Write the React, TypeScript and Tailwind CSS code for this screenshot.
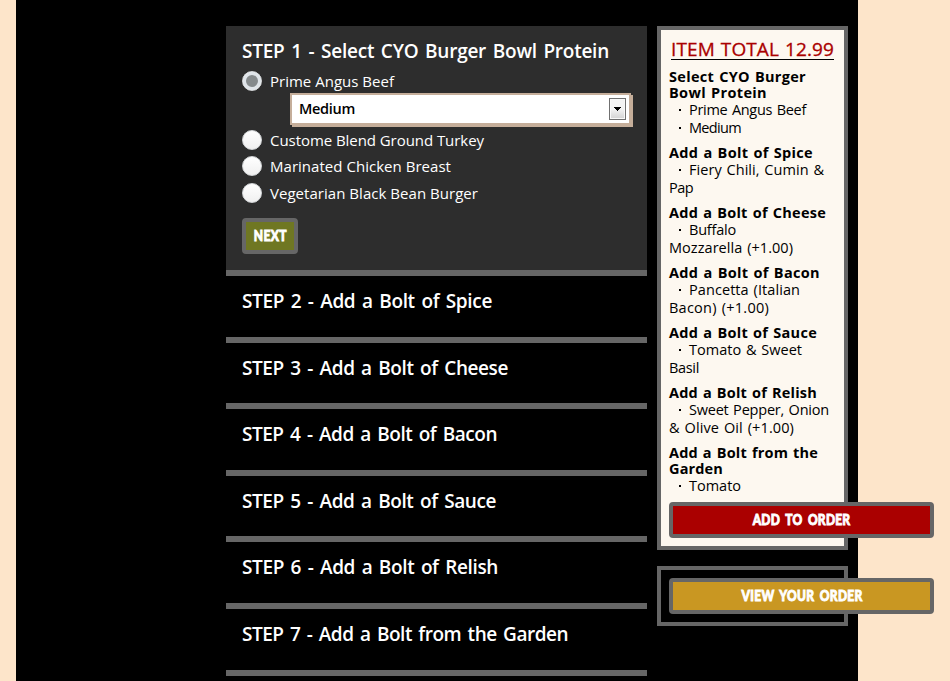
import { useLayoutEffect, useRef, type ReactNode } from "react";

/* A run of text whose tracking is tuned so that it fills `w` pixels. */
function Fit({ w, className = "", children }: { w: number; className?: string; children: string }) {
  const ref = useRef<HTMLSpanElement>(null);
  useLayoutEffect(() => {
    const el = ref.current;
    if (!el) return;
    el.style.letterSpacing = "0px";
    const natural = el.getBoundingClientRect().width;
    el.style.letterSpacing = `${(w - natural) / children.length}px`;
  }, [w, children]);
  return (
    <span ref={ref} className={`inline-block whitespace-pre ${className}`}>
      {children}
    </span>
  );
}

function StepTitle({ w, children }: { w: number; children: string }) {
  return (
    <h2 className="h-[26px] text-[19px] leading-[27px] font-semibold text-white">
      <Fit w={w} className="[word-spacing:2px]">{children}</Fit>
    </h2>
  );
}

function Radio({ label, w, checked = false, className = "" }: { label: string; w: number; checked?: boolean; className?: string }) {
  return (
    <label className={`flex h-5 items-center gap-2 text-[15px] leading-5 font-medium text-white ${className}`}>
      <span className="flex size-5 shrink-0 items-center justify-center rounded-full border border-[#d5d8da] bg-linear-to-b from-white to-[#f0f0f0]">
        {checked && <span className="size-full rounded-full border-[3px] border-[#dfe4e9] bg-[#858a8c]" />}
      </span>
      <Fit w={w}>{label}</Fit>
    </label>
  );
}

/* The caption is set condensed: laid out wider, then squeezed to 80%. */
function Button({ w, className, children }: { w: number; className: string; children: string }) {
  return (
    <button className={`flex h-9 shrink-0 items-center justify-center rounded-[4px] border-4 border-[#666] pb-px font-[Lato,sans-serif] text-[15px] leading-none font-black text-white ${className}`}>
      <span className="translate-x-[0.5px] scale-x-80">
        <CondensedCaption w={w}>{children}</CondensedCaption>
      </span>
    </button>
  );
}

function CondensedCaption({ w, children }: { w: number; children: string }) {
  const ref = useRef<HTMLSpanElement>(null);
  useLayoutEffect(() => {
    const el = ref.current;
    if (!el) return;
    el.style.letterSpacing = "0px";
    el.style.letterSpacing = `${(w / 0.8 - el.offsetWidth) / children.length}px`;
  }, [w, children]);
  return (
    <span ref={ref} className="inline-block whitespace-pre [-webkit-text-stroke:0.9px_white] [word-spacing:3px]">
      {children}
    </span>
  );
}

type Line = [string, number];

const groups: { heads: Line[]; items: { text: Line; rest?: Line }[] }[] = [
  { heads: [["Select CYO Burger", 137], ["Bowl Protein", 98]], items: [{ text: ["Prime Angus Beef", 117] }, { text: ["Medium", 52] }] },
  { heads: [["Add a Bolt of Spice", 144]], items: [{ text: ["Fiery Chili, Cumin &", 135], rest: ["Pap", 24] }] },
  { heads: [["Add a Bolt of Cheese", 157]], items: [{ text: ["Buffalo", 47], rest: ["Mozzarella (+1.00)", 124] }] },
  { heads: [["Add a Bolt of Bacon", 151]], items: [{ text: ["Pancetta (Italian", 111], rest: ["Bacon) (+1.00)", 100] }] },
  { heads: [["Add a Bolt of Sauce", 148]], items: [{ text: ["Tomato & Sweet", 113], rest: ["Basil", 30] }] },
  { heads: [["Add a Bolt of Relish", 148]], items: [{ text: ["Sweet Pepper, Onion", 140], rest: ["& Olive Oil (+1.00)", 125] }] },
  { heads: [["Add a Bolt from the", 149], ["Garden", 54]], items: [{ text: ["Tomato", 52] }] },
];

function Group({ heads, items }: (typeof groups)[number]) {
  return (
    <section className="mb-2">
      {heads.map(([t, w]) => (
        <h3 key={t} className="h-4 text-[14.5px] leading-4 font-bold">
          <Fit w={w} className="[word-spacing:1px]">{t}</Fit>
        </h3>
      ))}
      <ul className="text-[14.5px] leading-[18px]">
        {items.map(({ text, rest }) => (
          <li key={text[0]}>
            <div className="flex h-[18px] items-center">
              <span className="mr-[8px] ml-[10px] size-[2px] shrink-0 bg-black" />
              <Fit w={text[1]} className="[word-spacing:1px]">{text[0]}</Fit>
            </div>
            {rest && (
              <div className="h-[18px]">
                <Fit w={rest[1]} className="[word-spacing:1px]">{rest[0]}</Fit>
              </div>
            )}
          </li>
        ))}
      </ul>
    </section>
  );
}

function Step({ className, children }: { className: string; children: ReactNode }) {
  return <section className={`border-b-[6px] border-[#666] px-4 pt-3 ${className}`}>{children}</section>;
}

export default function App() {
  return (
    <div className="h-[681px] w-[950px] overflow-hidden bg-[#fde5ca] pl-4 font-['Open_Sans','Noto_Sans',sans-serif]">
      <main className="flex h-full w-[842px] items-start gap-[10px] bg-black pt-[26px] pl-[210px]">
        <div className="w-[421px] shrink-0">
          <Step className="h-[250px] bg-[#2d2d2d]">
            <StepTitle w={367}>STEP 1 - Select CYO Burger Bowl Protein</StepTitle>
            <Radio checked label="Prime Angus Beef" w={124} className="mt-[7px]" />
            <div className="mt-[2px] ml-12 flex h-8 w-[341px] items-center justify-between border-2 border-[#c5ae9a] bg-white pr-[3px] pl-[7px] text-[14.5px] font-semibold text-black shadow-[2px_2px_0_#c5ae9a]">
              <Fit w={56}>Medium</Fit>
              <span className="flex h-[22px] w-[17px] items-center justify-center border border-[#707070] bg-linear-to-b from-[#f3f3f3] from-50% to-[#d2d2d2] shadow-[inset_0_0_0_1px_#f8f8f8]">
                <svg width="7" height="4" shapeRendering="crispEdges">
                  <path d="M0 0h7v1H6v1H5v1H4v1H3V3H2V2H1V1H0z" fill="#000" />
                </svg>
              </span>
            </div>
            <Radio label="Custome Blend Ground Turkey" w={214} className="mt-[5px]" />
            <Radio label="Marinated Chicken Breast" w={181} className="mt-[6px]" />
            <Radio label="Vegetarian Black Bean Burger" w={208} className="mt-[7px]" />
            <Button w={33} className="mt-[15px] w-14 bg-[#6f7722]">NEXT</Button>
          </Step>
          <Step className="h-[67px]"><StepTitle w={250}>STEP 2 - Add a Bolt of Spice</StepTitle></Step>
          <Step className="h-[66px]"><StepTitle w={266}>STEP 3 - Add a Bolt of Cheese</StepTitle></Step>
          <Step className="h-[67px]"><StepTitle w={255}>STEP 4 - Add a Bolt of Bacon</StepTitle></Step>
          <Step className="h-[66px]"><StepTitle w={254}>STEP 5 - Add a Bolt of Sauce</StepTitle></Step>
          <Step className="h-[67px]"><StepTitle w={256}>STEP 6 - Add a Bolt of Relish</StepTitle></Step>
          <Step className="h-[67px]"><StepTitle w={326}>STEP 7 - Add a Bolt from the Garden</StepTitle></Step>
        </div>
        <aside className="w-[191px] shrink-0">
          <div className="h-[524px] border-4 border-[#666] bg-[#fdf8f0] px-2 pt-2 text-black">
            <h1 className="mb-[9px] ml-[2px] h-[22px] w-[163px] border-b border-black text-[19px] leading-[22px] font-medium text-[#a00]">
              <Fit w={163} className="[word-spacing:1px] [-webkit-text-stroke:0.3px_#a00]">ITEM TOTAL 12.99</Fit>
            </h1>
            {groups.map((g) => (
              <Group key={g.heads[0][0]} {...g} />
            ))}
            <Button w={98} className="-mt-px w-[265px] bg-[#a00]">ADD TO ORDER</Button>
          </div>
          <div className="mt-4 h-[60px] border-4 border-[#666] px-2 pt-2">
            <Button w={121} className="w-[265px] bg-[#c99722]">VIEW YOUR ORDER</Button>
          </div>
        </aside>
      </main>
    </div>
  );
}
